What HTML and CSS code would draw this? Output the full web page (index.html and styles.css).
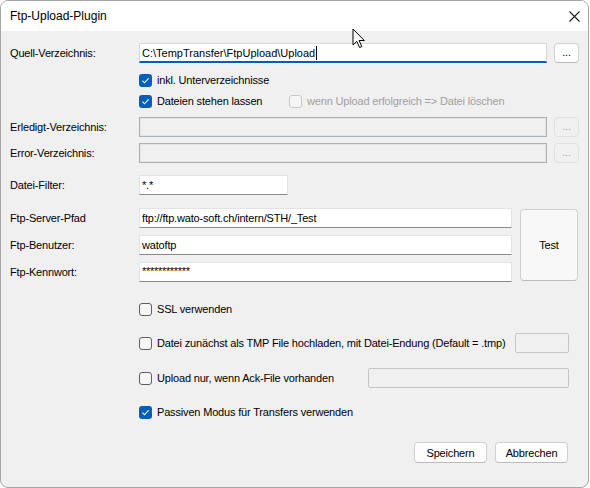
FILE: index.html
```html
<!DOCTYPE html>
<html>
<head>
<meta charset="utf-8">
<title>Ftp-Upload-Plugin</title>
<link rel="stylesheet" href="styles.css">
</head>
<body>
<div class="window">
  <div class="titlebar">
    <span class="title">Ftp-Upload-Plugin</span>
    <span class="close"><svg width="11" height="11" viewBox="0 0 11 11"><path d="M0.5 0.5L10.5 10.5M10.5 0.5L0.5 10.5" stroke="#1b1b1b" stroke-width="1.1" fill="none"/></svg></span>
  </div>
  <div class="content">
    <div class="row r-quell">
      <span class="lbl">Quell-Verzeichnis:</span>
      <div class="input focus w-path">C:\TempTransfer\FtpUpload\Upload<span class="caret"></span></div>
      <div class="btn dots">...</div>
    </div>
    <div class="row indent r-cb1">
      <span class="check">
        <svg class="box" width="13" height="13" viewBox="0 0 13 13"><rect width="13" height="13" rx="3" fill="#005fb8"/><path d="M3.4 6.7L5.5 8.8L9.6 4.4" stroke="#fff" stroke-width="1.1" fill="none"/></svg>
        <span>inkl. Unterverzeichnisse</span>
      </span>
    </div>
    <div class="row indent r-cb2">
      <span class="check first">
        <svg class="box" width="13" height="13" viewBox="0 0 13 13"><rect width="13" height="13" rx="3" fill="#005fb8"/><path d="M3.4 6.7L5.5 8.8L9.6 4.4" stroke="#fff" stroke-width="1.1" fill="none"/></svg>
        <span>Dateien stehen lassen</span>
      </span>
      <span class="check disabled">
        <svg class="box" width="13" height="13" viewBox="0 0 13 13"><rect x="0.5" y="0.5" width="12" height="12" rx="2.5" fill="#f5f5f5" stroke="#c8c8c8"/></svg>
        <span>wenn Upload erfolgreich =&gt; Datei löschen</span>
      </span>
    </div>
    <div class="row r-erl">
      <span class="lbl">Erledigt-Verzeichnis:</span>
      <div class="input disabled w-path"></div>
      <div class="btn dots disabled">...</div>
    </div>
    <div class="row r-err">
      <span class="lbl">Error-Verzeichnis:</span>
      <div class="input disabled w-path"></div>
      <div class="btn dots disabled">...</div>
    </div>
    <div class="row r-filter">
      <span class="lbl">Datei-Filter:</span>
      <div class="input w-filter">*.*</div>
    </div>
    <div class="ftp-group">
      <div class="ftp-rows">
        <div class="row">
          <span class="lbl">Ftp-Server-Pfad</span>
          <div class="input w-ftp">ftp://ftp.wato-soft.ch/intern/STH/_Test</div>
        </div>
        <div class="row">
          <span class="lbl">Ftp-Benutzer:</span>
          <div class="input w-ftp">watoftp</div>
        </div>
        <div class="row">
          <span class="lbl">Ftp-Kennwort:</span>
          <div class="input w-ftp pw">************</div>
        </div>
      </div>
      <div class="btn test">Test</div>
    </div>
    <div class="row indent r-ssl">
      <span class="check">
        <svg class="box" width="13" height="13" viewBox="0 0 13 13"><rect x="0.5" y="0.5" width="12" height="12" rx="2.5" fill="#f6f6f6" stroke="#5f5f5f"/></svg>
        <span>SSL verwenden</span>
      </span>
    </div>
    <div class="row indent r-tmp">
      <span class="check">
        <svg class="box" width="13" height="13" viewBox="0 0 13 13"><rect x="0.5" y="0.5" width="12" height="12" rx="2.5" fill="#f6f6f6" stroke="#5f5f5f"/></svg>
        <span>Datei zunächst als TMP File hochladen, mit Datei-Endung (Default = .tmp)</span>
      </span>
      <div class="input plain w-ext"></div>
    </div>
    <div class="row indent r-ack">
      <span class="check">
        <svg class="box" width="13" height="13" viewBox="0 0 13 13"><rect x="0.5" y="0.5" width="12" height="12" rx="2.5" fill="#f6f6f6" stroke="#5f5f5f"/></svg>
        <span>Upload nur, wenn Ack-File vorhanden</span>
      </span>
      <div class="input plain w-ack"></div>
    </div>
    <div class="row indent r-pasv">
      <span class="check">
        <svg class="box" width="13" height="13" viewBox="0 0 13 13"><rect width="13" height="13" rx="3" fill="#005fb8"/><path d="M3.4 6.7L5.5 8.8L9.6 4.4" stroke="#fff" stroke-width="1.1" fill="none"/></svg>
        <span>Passiven Modus für Transfers verwenden</span>
      </span>
    </div>
    <div class="actions">
      <div class="btn action">Speichern</div>
      <div class="btn action">Abbrechen</div>
    </div>
  </div>
  <svg class="cursor" width="14" height="22" viewBox="0 0 14 22"><path d="M1 1L1 17L4.8 13.3L7.6 19.6L9.8 18.6L7.1 12.5L12.3 12.5Z" fill="#fff" stroke="#000" stroke-width="1" stroke-linejoin="miter"/></svg>
</div>
</body>
</html>
```

FILE: styles.css
```css
* { box-sizing: border-box; }
html, body { margin: 0; padding: 0; }
body {
  width: 590px;
  height: 488px;
  overflow: hidden;
  background: #ffffff;
  font-family: "Liberation Sans", Arial, sans-serif;
  font-size: 11px;
  letter-spacing: -0.17px;
  color: #000;
}
.window {
  position: relative;
  width: 589px;
  height: 488px;
  border: 1px solid #a6a6a6;
  border-radius: 8px;
  overflow: hidden;
  background: #f0f0f0;
  display: flex;
  flex-direction: column;
}
.titlebar {
  height: 30px;
  flex-shrink: 0;
  background: #ffffff;
  display: flex;
  align-items: center;
  padding-left: 9px;
}
.title {
  font-size: 12px;
  letter-spacing: 0;
  color: #000;
}
.close {
  margin-left: auto;
  margin-right: 8px;
  display: flex;
}
.content {
  display: flex;
  flex-direction: column;
  padding: 12px 8px 0 9px;
}
.row {
  display: flex;
  align-items: center;
  height: 20px;
  flex-shrink: 0;
}
.lbl {
  width: 129px;
  flex-shrink: 0;
  white-space: nowrap;
}
.indent { padding-left: 129px; }

.input {
  height: 20px;
  background: #ffffff;
  border: 1px solid #e3e3e3;
  border-bottom-color: #8a8a8a;
  padding-left: 2px;
  display: flex;
  align-items: center;
  white-space: nowrap;
  overflow: hidden;
}
.input.focus {
  border-color: #d9d9d9;
  border-bottom: 2px solid #005fb8;
  padding-top: 1px;
  letter-spacing: 0;
}
.input.disabled {
  background: #f0f0f0;
  border: 1px solid #abb0b5;
  box-shadow: inset 0 0 0 1px #e2e4e6;
}
.input.plain {
  background: #f0f0f0;
  border: 1px solid #c6c6c6;
  border-radius: 2px;
}
.input.pw { align-items: flex-start; padding-top: 2px; letter-spacing: -0.3px; }
.caret {
  display: inline-block;
  width: 1px;
  height: 14px;
  background: #000;
  margin-left: 1px;
}
.w-path { width: 408px; margin-right: 7px; }
.w-filter { width: 149px; }
.w-ftp { width: 373px; }
.w-ext { width: 54px; margin-left: auto; }
.w-ack { width: 201px; margin-left: auto; }

.btn {
  display: flex;
  align-items: center;
  justify-content: center;
  background: #fdfdfd;
  border: 1px solid #d0d0d0;
  border-bottom-color: #bcbcbc;
  border-radius: 4px;
  color: #000;
}
.btn.dots {
  width: 25px;
  height: 20px;
  padding-bottom: 2px;
}
.btn.disabled {
  background: #f0f0f0;
  border-color: #e0e0e0;
  color: #b0a0a8;
}
.btn.test {
  width: 58px;
  margin: 1px 0 1px 8px;
  background: #f8f8f8;
}
.btn.action {
  width: 73px;
  height: 21px;
}

.check {
  display: flex;
  align-items: center;
  gap: 5px;
  white-space: nowrap;
}
.check .box { flex-shrink: 0; display: block; }
.check.first { width: 150px; }
.check.disabled { color: #a0a0a0; }

.r-cb1 { margin-top: 7px; }
.r-cb2 { margin-top: 1px; }
.r-erl { margin-top: 6px; }
.r-err { margin-top: 6px; }
.r-filter { margin-top: 12px; }
.ftp-group {
  display: flex;
  margin-top: 13px;
}
.ftp-rows {
  display: flex;
  flex-direction: column;
  gap: 7px;
}
.r-ssl { margin-top: 17px; }
.r-tmp { margin-top: 14px; margin-right: 11px; }
.r-ack { margin-top: 15px; margin-right: 11px; }
.r-pasv { margin-top: 14px; }
.actions {
  display: flex;
  justify-content: flex-end;
  gap: 8px;
  margin-top: 20px;
  margin-right: 12px;
}
.cursor {
  position: absolute;
  left: 351px;
  top: 27px;
}
```
